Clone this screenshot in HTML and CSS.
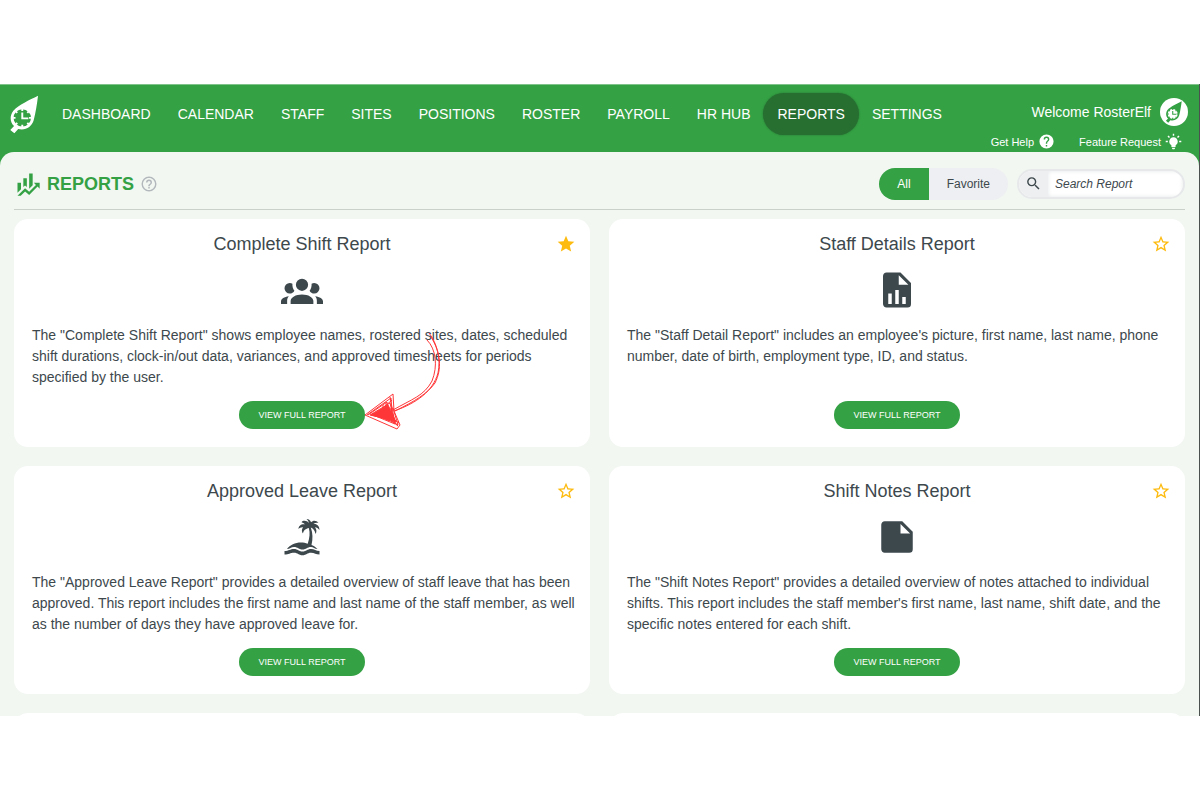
FILE: index.html
```
<!DOCTYPE html>
<html lang="en">
<head>
<meta charset="utf-8">
<meta name="viewport" content="width=device-width, initial-scale=1">
<title>RosterElf Reports</title>
<link rel="stylesheet" href="styles.css">
</head>
<body>
<svg class="sprite" aria-hidden="true">
  <symbol id="star" viewBox="0 0 24 24"><path d="M12,17.27L18.18,21L16.54,13.97L22,9.24L14.81,8.62L12,2L9.19,8.62L2,9.24L7.45,13.97L5.82,21L12,17.27Z"/></symbol>
  <symbol id="star-outline" viewBox="0 0 24 24"><path d="M12,15.39L8.24,17.66L9.23,13.38L5.91,10.5L10.29,10.13L12,6.09L13.71,10.13L18.09,10.5L14.77,13.38L15.76,17.66M22,9.24L14.81,8.63L12,2L9.19,8.63L2,9.24L7.45,13.97L5.82,21L12,17.27L18.18,21L16.54,13.97L22,9.24Z"/></symbol>
  <symbol id="elf" viewBox="0 0 30 40">
    <path d="M29 .5C20 5 9 10 3.500 16C-.5 21 -.2 28 4.200 32L.3 36L4.500 39.500L8.500 35C16 36.800 22.500 33 24.500 26C26.500 18 28 9 29 .5Z"/>
    <g class="elf-clock"><circle cx="12.700" cy="23.500" r="9"/><path class="elf-ring" d="M12.700 14V16.500M12.700 30.500V33M3.200 23.500H5.700M19.700 23.500H22.200M6 16.800L7.500 18.300M17.900 28.700L19.400 30.200M6 30.200L7.500 28.700M17.900 18.300L19.400 16.800"/><path class="elf-hands" d="M12.700 18V24H19"/></g>
  </symbol>
</svg>
<div class="screen">
  <header class="topbar">
    <a class="logo" href="#" aria-label="RosterElf home"><svg viewBox="0 0 30 40"><use href="#elf"/></svg></a>
    <nav class="nav">
      <a href="#">DASHBOARD</a><a href="#">CALENDAR</a><a href="#">STAFF</a><a href="#">SITES</a><a href="#">POSITIONS</a><a href="#">ROSTER</a><a href="#">PAYROLL</a><a href="#">HR HUB</a><a class="current" href="#" aria-current="page">REPORTS</a><a href="#">SETTINGS</a>
    </nav>
    <div class="account">
      <a class="welcome" href="#"><span>Welcome RosterElf</span><span class="avatar"><svg viewBox="0 0 30 40"><use href="#elf"/></svg></span></a>
      <div class="quick">
        <a href="#">Get Help <svg viewBox="0 0 24 24"><path d="M15.07,11.25L14.17,12.17C13.45,12.89 13,13.5 13,15H11V14.5C11,13.39 11.45,12.39 12.17,11.67L13.41,10.41C13.78,10.05 14,9.55 14,9C14,7.89 13.1,7 12,7A2,2 0 0,0 10,9H8A4,4 0 0,1 12,5A4,4 0 0,1 16,9C16,9.88 15.64,10.67 15.07,11.25M13,19H11V17H13M12,2A10,10 0 0,0 2,12A10,10 0 0,0 12,22A10,10 0 0,0 22,12C22,6.47 17.5,2 12,2Z"/></svg></a>
        <a href="#">Feature Request <svg viewBox="0 0 24 24"><path d="M12,6A6,6 0 0,1 18,12C18,14.22 16.79,16.16 15,17.2V19A1,1 0 0,1 14,20H10A1,1 0 0,1 9,19V17.2C7.21,16.16 6,14.22 6,12A6,6 0 0,1 12,6M14,21V22A1,1 0 0,1 13,23H11A1,1 0 0,1 10,22V21H14M20,11H23V13H20V11M1,11H4V13H1V11M13,1V4H11V1H13M4.92,3.5L7.05,5.64L5.63,7.05L3.5,4.93L4.92,3.5M16.95,5.63L19.07,3.5L20.5,4.93L18.37,7.05L16.95,5.63Z"/></svg></a>
      </div>
    </div>
  </header>
  <main class="panel">
    <div class="heading">
      <svg class="heading-icon" viewBox="0 0 24 24"><path d="M6,16.5L3,19.44V11H6M11,14.66L9.43,13.32L8,14.64V7H11M16,13L13,16V3H16M18.81,12.81L17,11H22V16L20.21,14.21L13,21.36L9.53,18.34L5.75,22H3L9.47,15.66L13,18.64"/></svg>
      <h1>REPORTS</h1>
      <svg class="hint" viewBox="0 0 24 24"><path d="M11,18H13V16H11V18M12,2A10,10 0 0,0 2,12A10,10 0 0,0 12,22A10,10 0 0,0 22,12A10,10 0 0,0 12,2M12,20C7.59,20 4,16.41 4,12C4,7.59 7.59,4 12,4C16.41,4 20,7.59 20,12C20,16.41 16.41,20 12,20M12,6A4,4 0 0,0 8,10H10A2,2 0 0,1 12,8A2,2 0 0,1 14,10C14,12 11,11.75 11,15H13C13,12.75 16,12.5 16,10A4,4 0 0,0 12,6Z"/></svg>
      <div class="toggle"><button class="on" type="button">All</button><button type="button">Favorite</button></div>
      <div class="search">
        <label for="search" aria-label="Search"><svg viewBox="0 0 24 24"><path d="M9.5,3A6.5,6.5 0 0,1 16,9.5C16,11.11 15.41,12.59 14.44,13.73L14.71,14H15.5L20.5,19L19,20.5L14,15.5V14.71L13.73,14.44C12.59,15.41 11.11,16 9.5,16A6.5,6.5 0 0,1 3,9.5A6.5,6.5 0 0,1 9.5,3M9.5,5C7,5 5,7 5,9.5C5,12 7,14 9.5,14C12,14 14,12 14,9.5C14,7 12,5 9.5,5Z"/></svg></label>
        <input id="search" type="text" placeholder="Search Report">
      </div>
    </div>
    <div class="cards">
      <article class="card">
        <button class="fav" type="button" aria-label="Remove favorite"><svg><use href="#star"/></svg></button>
        <h2>Complete Shift Report</h2>
        <svg class="icon" viewBox="0 0 24 24"><path d="M12,5.5A3.5,3.5 0 0,1 15.5,9A3.5,3.5 0 0,1 12,12.5A3.5,3.5 0 0,1 8.5,9A3.5,3.5 0 0,1 12,5.5M5,8C5.56,8 6.08,8.15 6.53,8.42C6.38,9.85 6.8,11.27 7.66,12.38C7.16,13.34 6.16,14 5,14A3,3 0 0,1 2,11A3,3 0 0,1 5,8M19,8A3,3 0 0,1 22,11A3,3 0 0,1 19,14C17.84,14 16.84,13.34 16.34,12.38C17.2,11.27 17.62,9.85 17.47,8.42C17.92,8.15 18.44,8 19,8M5.5,18.25C5.5,16.18 8.41,14.5 12,14.5C15.59,14.5 18.5,16.18 18.5,18.25V20H5.5V18.25M0,20V18.5C0,17.11 1.89,15.94 4.45,15.6C3.86,16.28 3.5,17.22 3.5,18.25V20H0M24,20H20.5V18.25C20.5,17.22 20.14,16.28 19.55,15.6C22.11,15.94 24,17.11 24,18.5V20Z"/></svg>
        <p>The "Complete Shift Report" shows employee names, rostered sites, dates, scheduled shift durations, clock-in/out data, variances, and approved timesheets for periods specified by the user.</p>
        <div class="action">
          <button class="view" type="button">VIEW FULL REPORT</button>
          <svg class="arrow" viewBox="0 0 78 102" aria-hidden="true">
            <path d="M64 2C72 12 76 28 73 42C68 60 52 72 29 80M62 9C71 18 73 35 67 50C59 65 47 68 28 79M66 6C76 22 77 38 70 52C62 63 50 70 30 80"/>
            <path d="M0 84L28 63L29 80L35 94L32 98L0 84ZM2 84L26 67L27 89L5 84L25 72L30 93L8 84L28 77L33 94L14 84M3 84L22 71L24 90L11 83L27 69M18 74V88M21 71V89M25 66L30 92M14 79L33 95L25 86L34 92"/>
            <path class="arrow-fill" d="M6 84L23 74L26 80L31 91L22 88Z"/>
          </svg>
        </div>
      </article>
      <article class="card">
        <button class="fav" type="button" aria-label="Add favorite"><svg><use href="#star-outline"/></svg></button>
        <h2>Staff Details Report</h2>
        <svg class="icon" viewBox="0 0 24 24"><path d="M13,9H18.5L13,3.5V9M6,2H14L20,8V20A2,2 0 0,1 18,22H6C4.89,22 4,21.1 4,20V4C4,2.89 4.89,2 6,2M7,20H9V14H7V20M11,20H13V12H11V20M15,20H17V16H15V20Z"/></svg>
        <p>The "Staff Detail Report" includes an employee's picture, first name, last name, phone number, date of birth, employment type, ID, and status.</p>
        <div class="action"><button class="view" type="button">VIEW FULL REPORT</button></div>
      </article>
      <article class="card">
        <button class="fav" type="button" aria-label="Add favorite"><svg><use href="#star-outline"/></svg></button>
        <h2>Approved Leave Report</h2>
        <svg class="icon" viewBox="0 0 42 42"><path d="M6 33C9 29 14 26.500 20 26.500C22.500 26.500 24.500 27 26.700 27.700C28.700 22 29.200 17 27.800 12C25 12.500 22.300 14.500 22 17.500C20.500 16 20.500 13.500 22 11.300C20.500 11 18.500 11.800 17.500 13C17.500 10 20 7.700 24 8.300C22.800 7.200 21.800 6.500 20.500 6.200C22 4 26 4.500 28 7C27.500 5 26.500 3.800 25.500 3C28 3 29.500 4.300 30 6.200C32 4 35.500 4 37.500 7C35.500 6.500 33.800 7 32.500 8C36 7.500 38.500 10 38.500 14C37.300 12.500 35.700 11.300 34 11.200C35.800 13.500 35.800 16 34.500 18C34 15 32.500 12.500 29.800 11.500C31.800 17 32 23 30.500 29C33 30 35 31.500 36.500 33C33.500 33 32.500 31 30 31C26 31 25.500 33.500 21.500 33.500C17.500 33.500 17 31 13 31C10 31 9 33 6 33ZM3.500 35C8 35 9 33 13 33C17 33 17.500 35.500 21.500 35.500C25.500 35.500 26 33 30 33C33.500 33 35 35 38.500 35V38.500C35 38.500 33.500 36.700 30 36.700C26 36.700 25.500 39.200 21.500 39.200C17.500 39.200 17 36.700 13 36.700C9 36.700 8 38.500 3.500 38.500Z"/></svg>
        <p>The "Approved Leave Report" provides a detailed overview of staff leave that has been approved. This report includes the first name and last name of the staff member, as well as the number of days they have approved leave for.</p>
        <div class="action"><button class="view" type="button">VIEW FULL REPORT</button></div>
      </article>
      <article class="card">
        <button class="fav" type="button" aria-label="Add favorite"><svg><use href="#star-outline"/></svg></button>
        <h2>Shift Notes Report</h2>
        <svg class="icon" viewBox="0 0 24 24"><path d="M14,10H19.5L14,4.500V10M5,3H15L21,9V19A2,2 0 0,1 19,21H5C3.89,21 3,20.1 3,19V5C3,3.89 3.89,3 5,3Z"/></svg>
        <p>The "Shift Notes Report" provides a detailed overview of notes attached to individual shifts. This report includes the staff member's first name, last name, shift date, and the specific notes entered for each shift.</p>
        <div class="action"><button class="view" type="button">VIEW FULL REPORT</button></div>
      </article>
      <article class="card"></article>
      <article class="card"></article>
    </div>
  </main>
</div>
</body>
</html>
```
FILE: styles.css
```
* { box-sizing: border-box; }
body {
  margin: 0;
  padding: 84px 0;
  background: #fff;
  color: #3d484d;
  font-family: "Liberation Sans", Arial, sans-serif;
  font-size: 14px;
}
a { color: inherit; text-decoration: none; }
button, input { font: inherit; color: inherit; border: 0; }
button { cursor: pointer; padding: 0; }
svg { fill: currentColor; flex: none; }
.sprite { position: absolute; width: 0; height: 0; }
.elf-clock { fill: var(--dial); }
.elf-ring, .elf-hands { fill: none; stroke-width: 2; stroke: currentColor; }

.screen {
  height: calc(100vh - 168px);
  overflow: hidden;
  background: #34a144;
  border-right: 1px solid #4b514e;
}
.topbar {
  display: flex;
  align-items: flex-start;
  height: 68px;
  padding: 0 11px 0 10px;
  color: #fff;
  --dial: #34a144;
  border-top: 1px solid #7fc38a;
}
.logo { width: 38px; padding-top: 10px; }
.logo svg { display: block; width: 29px; height: 39px; }
.nav { display: flex; padding-top: 8px; }
.nav a { margin-right: -1px; padding: 0 14px; line-height: 42px; border-radius: 21px; white-space: nowrap; }
.nav .current { background: #266f31; box-shadow: 0 0 2px #266f31; }
.account { margin-left: auto; padding-top: 13px; white-space: nowrap; }
.welcome { display: flex; align-items: center; justify-content: flex-end; gap: 9px; }
.avatar {
  display: grid;
  place-items: center;
  width: 28px;
  height: 28px;
  border-radius: 50%;
  background: #fff;
  color: #34a144;
  --dial: #fff;
}
.avatar svg { width: 18px; height: 22px; }
.quick { display: flex; justify-content: flex-end; gap: 24px; padding: 7px 6px 0 0; font-size: 11px; }
.quick a { display: flex; align-items: center; gap: 4px; line-height: 16px; }
.quick svg { width: 17px; height: 17px; }

.panel { min-height: 100%; padding: 0 14px; background: #f2f7f2; border-radius: 14px 14px 0 0; }
.heading {
  display: flex;
  align-items: center;
  height: 58px;
  padding-top: 6px;
  border-bottom: 1px solid #c9d1ca;
}
.heading-icon { width: 28px; height: 28px; color: #34a144; }
h1 { margin: 0 6px 0 5px; font-size: 18px; line-height: 22px; color: #34a144; }
.hint { width: 18px; height: 18px; color: #b3b8bd; }
.toggle { display: flex; margin-left: auto; font-size: 12px; }
.toggle button { height: 32px; padding: 0 18px; background: #eeeff2; border-radius: 0 16px 16px 0; }
.toggle .on { background: #34a144; color: #fff; border-radius: 16px 0 0 16px; }
.search {
  display: flex;
  width: 168px;
  height: 30px;
  margin-left: 9px;
  overflow: hidden;
  border: 2px solid #e6e8ea;
  border-radius: 15px;
  background: #fff;
}
.search label { display: grid; place-items: center; width: 29px; background: #eeeff0; }
.search svg { width: 17px; height: 17px; }
.search input { flex: 1; min-width: 0; padding: 0 7px; font-size: 12px; font-style: italic; outline: 0; background: none; box-shadow: inset 0 0 4px #e4e6e8; }
.search input::placeholder { color: #3d484d; opacity: 1; }

.cards { display: grid; grid-template-columns: 1fr 1fr; gap: 19px; padding-top: 9px; }
.card {
  position: relative;
  display: flex;
  flex-direction: column;
  align-items: center;
  min-height: 228px;
  padding: 14px 12px 18px;
  background: #fff;
  border-radius: 14px;
}
.card h2 { margin: 0; font-size: 18px; line-height: 22px; font-weight: 400; }
.icon { width: 42px; height: 42px; margin: 14px 0; }
.card p { width: 100%; min-height: 63px; margin: 0 0 13px; padding-left: 6px; line-height: 21px; }
.fav { position: absolute; top: 15px; right: 14px; width: 20px; height: 20px; background: none; color: #fdbb0f; }
.fav svg { display: block; width: 20px; height: 20px; }
.action { position: relative; margin-top: auto; }
.view { display: block; width: 126px; height: 28px; border-radius: 14px; background: #34a144; color: #fff; font-size: 9px; }
.arrow {
  position: absolute;
  left: 100%;
  bottom: -4px;
  width: 78px;
  height: 102px;
  fill: none;
  stroke: #ff3638;
  stroke-width: 1;
  stroke-linejoin: round;
  pointer-events: none;
}
.arrow-fill { fill: #ff3638; }
```
